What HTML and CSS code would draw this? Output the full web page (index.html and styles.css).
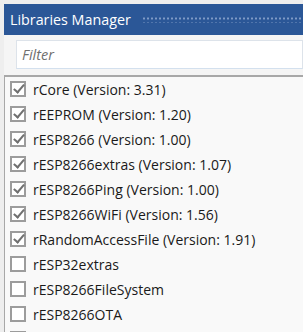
FILE: index.html
```html
<!DOCTYPE html>
<html lang="en">
<head>
  <meta charset="UTF-8">
  <title>Libraries Manager</title>
  <link rel="stylesheet" href="styles.css">
</head>
<body>

<div class="window">
  <div class="titlebar">
    <span class="title">Libraries Manager</span>
    <span class="grip"></span>
  </div>

  <div class="filter-row">
    <input type="text" class="filter" placeholder="Filter">
  </div>

  <ul class="libs">
    <li><span class="box checked"></span>rCore (Version: 3.31)</li>
    <li><span class="box checked"></span>rEEPROM (Version: 1.20)</li>
    <li><span class="box checked"></span>rESP8266 (Version: 1.00)</li>
    <li><span class="box checked"></span>rESP8266extras (Version: 1.07)</li>
    <li><span class="box checked"></span>rESP8266Ping (Version: 1.00)</li>
    <li><span class="box checked"></span>rESP8266WiFi (Version: 1.56)</li>
    <li><span class="box checked"></span>rRandomAccessFile (Version: 1.91)</li>
    <li><span class="box"></span>rESP32extras</li>
    <li><span class="box"></span>rESP8266FileSystem</li>
    <li><span class="box"></span>rESP8266OTA</li>
    <li><span class="box"></span></li>
  </ul>
</div>

</body>
</html>
```

FILE: styles.css
```css
body {
  margin: 0;
  padding: 4px 0 0 4px;
  background: #eeeeee;
  font-family: "Open Sans", "Noto Sans", sans-serif;
  overflow: hidden;
  height: 328px;
}
.window {
  background: #f5f5f5;
  height: 100%;
  overflow: hidden;
}
.titlebar {
  background: #2b5797;
  height: 31px;
  display: flex;
  align-items: center;
  padding-left: 6px;
}
.title {
  color: white;
  font-size: 14.3px;
  white-space: nowrap;
}
.grip {
  flex: 1;
  height: 7px;
  margin-left: 11px;
  background-image: radial-gradient(circle, #7f9bc6 0.9px, transparent 1.3px);
  background-size: 4px 5px;
  background-position: 0 0;
}
.filter-row {
  padding: 5px 0 6px 12px;
}
.filter {
  display: block;
  width: 100%;
  height: 29px;
  box-sizing: border-box;
  border: 1px solid #dde3ea;
  border-bottom-color: #d3e0ee;
  background: white;
  padding: 0 5px;
  font-family: "Open Sans", "Noto Sans", sans-serif;
  font-size: 14.5px;
  outline: none;
}
.filter::placeholder {
  color: #6f6f6f;
  font-style: italic;
}
.libs {
  list-style: none;
  margin: 0;
  padding: 0;
  border-top: 2px solid #a8a8a8;
  border-left: 1px solid #a8a8a8;
  background: #f9f9f9;
}
.libs li {
  height: 25px;
  box-sizing: border-box;
  display: flex;
  align-items: center;
  font-size: 14px;
  color: #1a1a1a;
  white-space: nowrap;
  padding-bottom: 1px;
}
.box {
  width: 16px;
  height: 16px;
  box-sizing: border-box;
  border: 2px solid #9c9c9c;
  background: white;
  margin: 0 7px 0 5px;
  flex-shrink: 0;
  position: relative;
}
.box.checked::after {
  content: "";
  position: absolute;
  left: 4px;
  top: -1px;
  width: 4px;
  height: 9px;
  border: solid #707070;
  border-width: 0 2px 2px 0;
  transform: rotate(40deg);
}
```
